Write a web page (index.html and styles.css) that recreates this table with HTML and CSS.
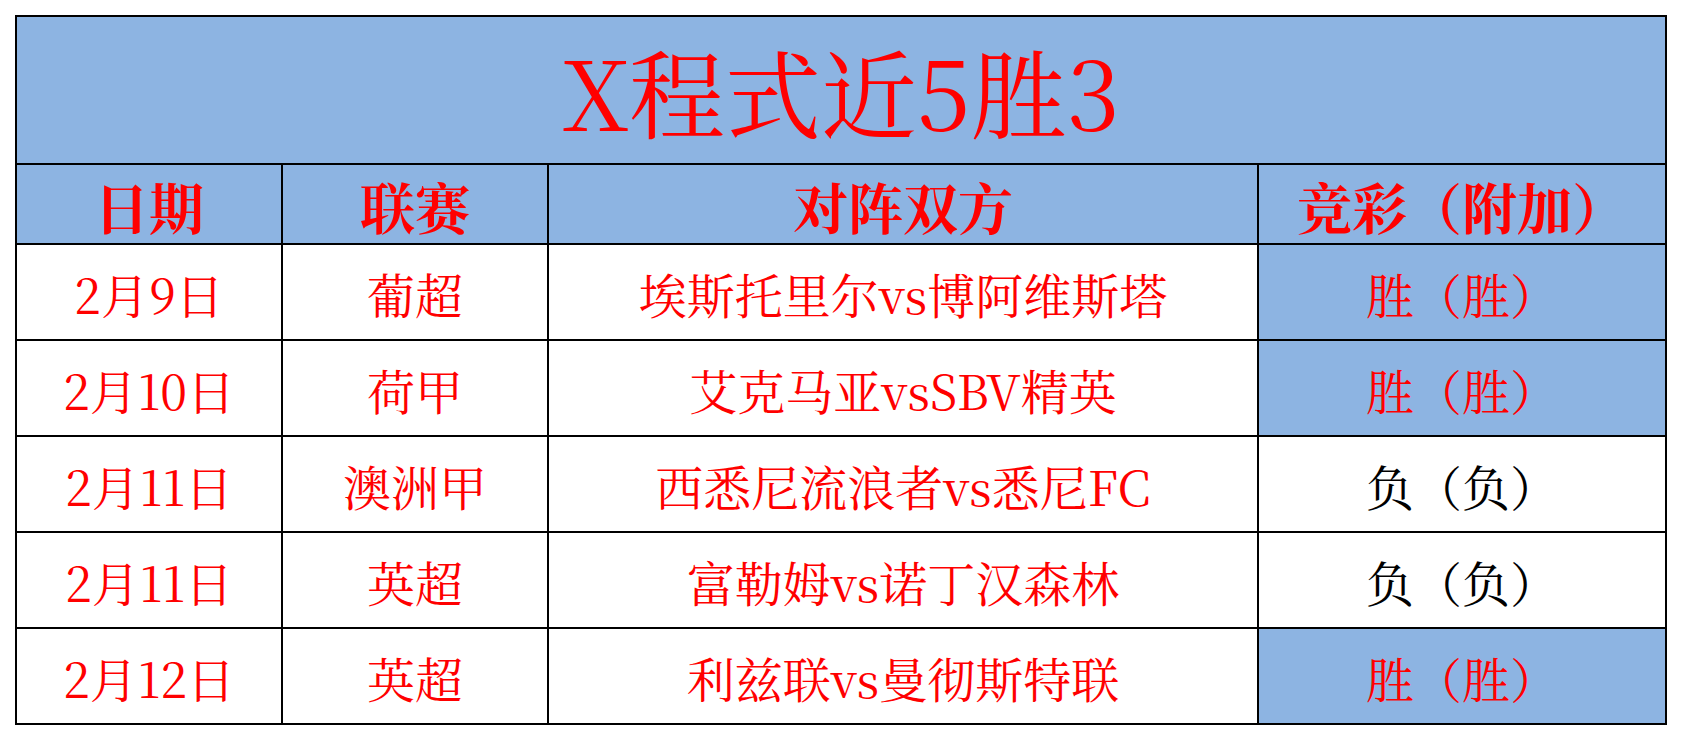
FILE: index.html
```html
<!DOCTYPE html>
<html lang="zh-CN">
<head>
<meta charset="utf-8">
<title>X程式近5胜3</title>
<link rel="stylesheet" href="styles.css">
</head>
<body>
<div class="sheet">
  <div class="cell title">X程式近5胜3</div>

  <div class="cell head">日期</div>
  <div class="cell head">联赛</div>
  <div class="cell head">对阵双方</div>
  <div class="cell head">竞彩（附加）</div>

  <div class="cell">2月9日</div>
  <div class="cell">葡超</div>
  <div class="cell">埃斯托里尔vs博阿维斯塔</div>
  <div class="cell win">胜（胜）</div>

  <div class="cell">2月10日</div>
  <div class="cell">荷甲</div>
  <div class="cell">艾克马亚vsSBV精英</div>
  <div class="cell win">胜（胜）</div>

  <div class="cell">2月11日</div>
  <div class="cell">澳洲甲</div>
  <div class="cell">西悉尼流浪者vs悉尼FC</div>
  <div class="cell loss">负（负）</div>

  <div class="cell">2月11日</div>
  <div class="cell">英超</div>
  <div class="cell">富勒姆vs诺丁汉森林</div>
  <div class="cell loss">负（负）</div>

  <div class="cell">2月12日</div>
  <div class="cell">英超</div>
  <div class="cell">利兹联vs曼彻斯特联</div>
  <div class="cell win">胜（胜）</div>
</div>
</body>
</html>
```

FILE: styles.css
```css
html, body {
  margin: 0;
  padding: 0;
  background: #ffffff;
}

body {
  padding: 15px 0 0 15px;
}

.sheet {
  display: grid;
  grid-template-columns: 264px 264px 708px 406px;
  grid-template-rows: 146px 78px 94px 94px 94px 94px 94px;
  gap: 2px;
  padding: 2px;
  width: 1648px;
  background: #000000;
  font-family: "Noto Serif CJK SC", "Liberation Serif", "Noto Sans CJK SC", serif;
  color: #ff0000;
}

.cell {
  background: #ffffff;
  display: flex;
  align-items: center;
  justify-content: center;
  font-size: 48px;
  line-height: 1;
  white-space: nowrap;
  padding-top: 4px;
  box-sizing: border-box;
}

.title {
  grid-column: 1 / 5;
  background: #8db4e2;
  font-size: 96px;
  padding-top: 0;
  transform-origin: center;
}

.head {
  background: #8db4e2;
  font-size: 55px;
  font-weight: bold;
  padding-top: 2px;
}

.win {
  background: #8db4e2;
}

.loss {
  color: #000000;
}
```
